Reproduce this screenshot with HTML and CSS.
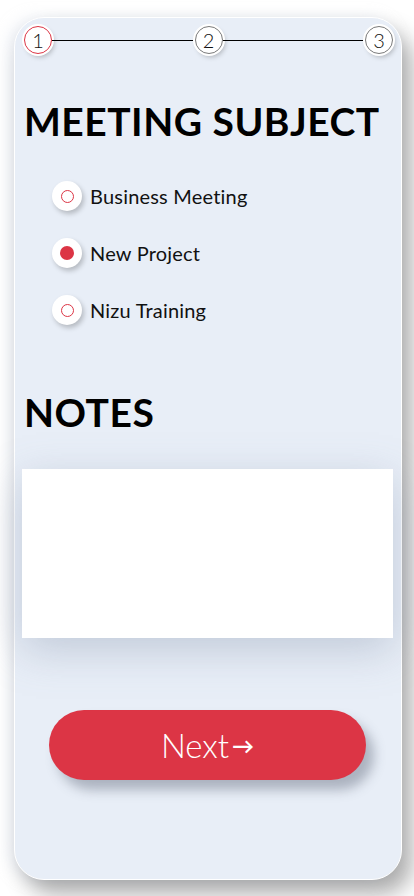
FILE: index.html
```html
<!DOCTYPE html>
<html>
<head>
<meta charset="utf-8">
<link rel="stylesheet" href="styles.css">
</head>
<body>
<div class="card">
  <div class="stepper">
    <div class="step active">1</div>
    <div class="line"></div>
    <div class="step">2</div>
    <div class="line"></div>
    <div class="step">3</div>
  </div>
  <h1 class="title">MEETING SUBJECT</h1>
  <div class="options">
    <label class="option"><span class="radio"><span class="ring"></span></span><span class="label">Business Meeting</span></label>
    <label class="option"><span class="radio"><span class="dot"></span></span><span class="label">New Project</span></label>
    <label class="option"><span class="radio"><span class="ring"></span></span><span class="label">Nizu Training</span></label>
  </div>
  <h2 class="title notes-title">NOTES</h2>
  <div class="notes"></div>
  <div class="actions">
    <button class="next">Next<span class="arrow">&#8594;</span></button>
  </div>
</div>
</body>
</html>
```
FILE: styles.css
```css
html, body { margin: 0; padding: 0; }
body {
  background: #ffffff;
  width: 414px;
  height: 896px;
  overflow: hidden;
  font-family: "Lato", "Noto Sans", sans-serif;
  padding: 17px 12px 0 14px;
  box-sizing: border-box;
}
.card {
  box-sizing: border-box;
  height: 863px;
  background: #e8eef7;
  border: 1px solid #ffffff;
  border-radius: 30px;
  box-shadow: 10px 14px 22px rgba(0,0,0,0.32), -6px 0 14px rgba(220,225,235,0.5);
  padding: 8px 8px 0 8px;
  display: flex;
  flex-direction: column;
}
.stepper {
  display: flex;
  align-items: center;
  padding: 0 0 0 1px;
}
.step {
  width: 28px;
  height: 28px;
  box-sizing: border-box;
  border-radius: 50%;
  background: #fff;
  border: 1px solid #7a7a7a;
  box-shadow: 0 0 0 2px #fff, 2px 3px 5px rgba(0,0,0,0.25);
  display: flex;
  align-items: center;
  justify-content: center;
  font-size: 20px;
  color: #111;
  font-weight: 300;
}
.step.active { border-color: #dc3545; }
.line { flex: 1; height: 1px; background: #000; }
.title {
  margin: 48px 0 0 1px;
  font-size: 39px;
  font-weight: 700;
  line-height: 1;
  color: #000;
  letter-spacing: 0.5px;
}
.options {
  display: flex;
  flex-direction: column;
  gap: 27px;
  margin: 40px 0 0 29px;
}
.option {
  display: flex;
  align-items: center;
  gap: 8px;
}
.radio {
  width: 30px;
  height: 30px;
  border-radius: 50%;
  background: #fff;
  box-shadow: 2px 3px 5px rgba(0,0,0,0.22);
  display: flex;
  align-items: center;
  justify-content: center;
}
.ring {
  width: 11px;
  height: 11px;
  border-radius: 50%;
  border: 1px solid #dc3545;
}
.dot {
  width: 14px;
  height: 14px;
  border-radius: 50%;
  background: #dc3545;
}
.label {
  font-size: 20px;
  color: #111;
  font-weight: 400;
  letter-spacing: 0.2px;
}
.notes-title { margin-top: 68px; }
.notes {
  margin: 37px 0 0 -1px;
  width: 371px;
  height: 169px;
  background: #fff;
  box-shadow: 0 12px 40px rgba(120,135,160,0.35);
}
.actions {
  display: flex;
  margin: 72px 0 0 26px;
}
.next {
  width: 317px;
  height: 70px;
  border: none;
  border-radius: 35px;
  background: #dc3545;
  color: #fff;
  font-family: "Lato", "Noto Sans", sans-serif;
  font-size: 33px;
  font-weight: 300;
  box-shadow: 8px 10px 12px rgba(60,70,90,0.35);
  display: flex;
  align-items: center;
  justify-content: center;
  padding: 0;
}
.arrow { font-size: 22px; font-weight: 700; margin-left: 3px; }
```
